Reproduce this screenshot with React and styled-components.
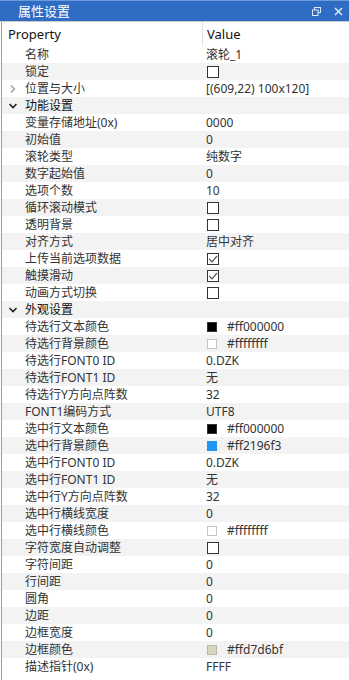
import React from 'react'
import styled, { createGlobalStyle } from 'styled-components'

const GlobalStyle = createGlobalStyle`
    html, body {
        margin: 0;
        padding: 0;
        background: #fff;
    }
    body {
        font-family: "Noto Sans", "Noto Sans CJK SC", sans-serif;
        color: #222;
    }
`

const Panel = styled.div`
    width: 349px;
    height: 680px;
    overflow: hidden;
    background: #fff;
    display: flex;
    flex-direction: column;
`
const TitleBar = styled.div`
    height: 22px;
    background: #2f6cc4;
    border-top: 1px solid #6d9ad8;
    box-sizing: border-box;
    display: flex;
    align-items: center;
    padding: 0 6px 0 18px;
    color: #fff;
    font-size: 13px;
    border-bottom: 1px solid #c9c9c9;
`
const Title = styled.div`
    flex: 1;
    line-height: 20px;
`
const TitleIcons = styled.div`
    display: flex;
    align-items: center;
    gap: 13px;
`
const Body = styled.div`
    flex: 1;
    border-left: 1px solid #9a9a9a;
    margin-left: 1px;
`
const Header = styled.div`
    height: 24px;
    display: grid;
    grid-template-columns: 201px 1fr;
    font-size: 13px;
    color: #111;
    align-items: center;
`
const HeaderCell = styled.div`
    height: 100%;
    display: flex;
    align-items: center;
    padding-left: ${p => p.$pad}px;
    border-right: ${p => p.$divider ? '1px solid #e3e3e3' : 'none'};
`
const Row = styled.div`
    height: 17px;
    display: grid;
    grid-template-columns: 204px 1fr;
    align-items: center;
    background: ${p => p.$shade ? '#f3f3f3' : '#fff'};
    font-size: 12px;
    line-height: 17px;
`
const Label = styled.div`
    display: flex;
    align-items: center;
    color: ${p => p.$group ? '#111' : '#333'};
`
const Toggle = styled.span`
    width: 25px;
    display: flex;
    justify-content: center;
    margin-left: -2px;
`
const Value = styled.div`
    display: flex;
    align-items: center;
    gap: 8px;
    color: #333;
    white-space: nowrap;
`
const Check = styled.span`
    width: 12px;
    height: 12px;
    box-sizing: border-box;
    border: 1px solid #333;
    background: #fff;
    display: flex;
    align-items: center;
    justify-content: center;
    margin-left: 1px;
`
const Swatch = styled.span`
    width: 10px;
    height: 10px;
    box-sizing: border-box;
    background: ${p => p.$color};
    border: 1px solid ${p => p.$border};
    margin-left: 1px;
    margin-right: 2px;
`

const rows = [
    { label: '名称', value: '滚轮_1' },
    { label: '锁定', check: false },
    { label: '位置与大小', value: '[(609,22) 100x120]', expand: 'right' },
    { label: '功能设置', group: true },
    { label: '变量存储地址(0x)', value: '0000' },
    { label: '初始值', value: '0' },
    { label: '滚轮类型', value: '纯数字' },
    { label: '数字起始值', value: '0' },
    { label: '选项个数', value: '10' },
    { label: '循环滚动模式', check: false },
    { label: '透明背景', check: false },
    { label: '对齐方式', value: '居中对齐' },
    { label: '上传当前选项数据', check: true },
    { label: '触摸滑动', check: true },
    { label: '动画方式切换', check: false },
    { label: '外观设置', group: true },
    { label: '待选行文本颜色', color: '#000000', border: '#333', value: '#ff000000' },
    { label: '待选行背景颜色', color: '#ffffff', border: '#c4c4c4', value: '#ffffffff' },
    { label: '待选行FONT0 ID', value: '0.DZK' },
    { label: '待选行FONT1 ID', value: '无' },
    { label: '待选行Y方向点阵数', value: '32' },
    { label: 'FONT1编码方式', value: 'UTF8' },
    { label: '选中行文本颜色', color: '#000000', border: '#333', value: '#ff000000' },
    { label: '选中行背景颜色', color: '#2196f3', border: '#2196f3', value: '#ff2196f3' },
    { label: '选中行FONT0 ID', value: '0.DZK' },
    { label: '选中行FONT1 ID', value: '无' },
    { label: '选中行Y方向点阵数', value: '32' },
    { label: '选中行横线宽度', value: '0' },
    { label: '选中行横线颜色', color: '#ffffff', border: '#c4c4c4', value: '#ffffffff' },
    { label: '字符宽度自动调整', check: false },
    { label: '字符间距', value: '0' },
    { label: '行间距', value: '0' },
    { label: '圆角', value: '0' },
    { label: '边距', value: '0' },
    { label: '边框宽度', value: '0' },
    { label: '边框颜色', color: '#d7d6bf', border: '#b9b8a4', value: '#ffd7d6bf' },
    { label: '描述指针(0x)', value: 'FFFF' },
]

const ChevronDown = () => (
    <svg width="10" height="10" viewBox="0 0 10 10">
        <path d="M1.5 3 L5 6.5 L8.5 3" fill="none" stroke="#222" strokeWidth="1.6" />
    </svg>
)
const ChevronRight = () => (
    <svg width="10" height="10" viewBox="0 0 10 10">
        <path d="M3 1.5 L6.5 5 L3 8.5" fill="none" stroke="#9a9a9a" strokeWidth="1.3" />
    </svg>
)
const Tick = () => (
    <svg width="10" height="10" viewBox="0 0 10 10">
        <path d="M1.2 5 L4 7.8 L9 2" fill="none" stroke="#555" strokeWidth="1.2" />
    </svg>
)

const RestoreIcon = () => (
    <svg width="9" height="9" viewBox="0 0 9 9">
        <rect x="2.5" y="0.5" width="6" height="5" fill="none" stroke="#dfe8f6" strokeWidth="1" />
        <rect x="0.5" y="3" width="5.5" height="5.5" fill="#2f6cc4" stroke="#dfe8f6" strokeWidth="1" />
    </svg>
)
const CloseIcon = () => (
    <svg width="9" height="9" viewBox="0 0 9 9">
        <path d="M1 1 L8 8 M8 1 L1 8" stroke="#dfe8f6" strokeWidth="1.5" />
    </svg>
)

const renderValue = (r) => {
    if (r.group) return null
    if (r.check !== undefined) {
        return <Check>{r.check && <Tick />}</Check>
    }
    if (r.color) {
        return <><Swatch $color={r.color} $border={r.border} />{r.value}</>
    }
    return r.value
}

const App = () => (
    <Panel>
        <GlobalStyle />
        <TitleBar>
            <Title>属性设置</Title>
            <TitleIcons>
                <RestoreIcon />
                <CloseIcon />
            </TitleIcons>
        </TitleBar>
        <Body>
            <Header>
                <HeaderCell $pad={6} $divider>Property</HeaderCell>
                <HeaderCell $pad={4}>Value</HeaderCell>
            </Header>
            {rows.map((r, i) => (
                <Row key={i} $shade={i % 2 === 1}>
                    <Label $group={r.group}>
                        <Toggle>
                            {r.group && <ChevronDown />}
                            {r.expand && <ChevronRight />}
                        </Toggle>
                        {r.label}
                    </Label>
                    <Value>{renderValue(r)}</Value>
                </Row>
            ))}
        </Body>
    </Panel>
)

export default App
